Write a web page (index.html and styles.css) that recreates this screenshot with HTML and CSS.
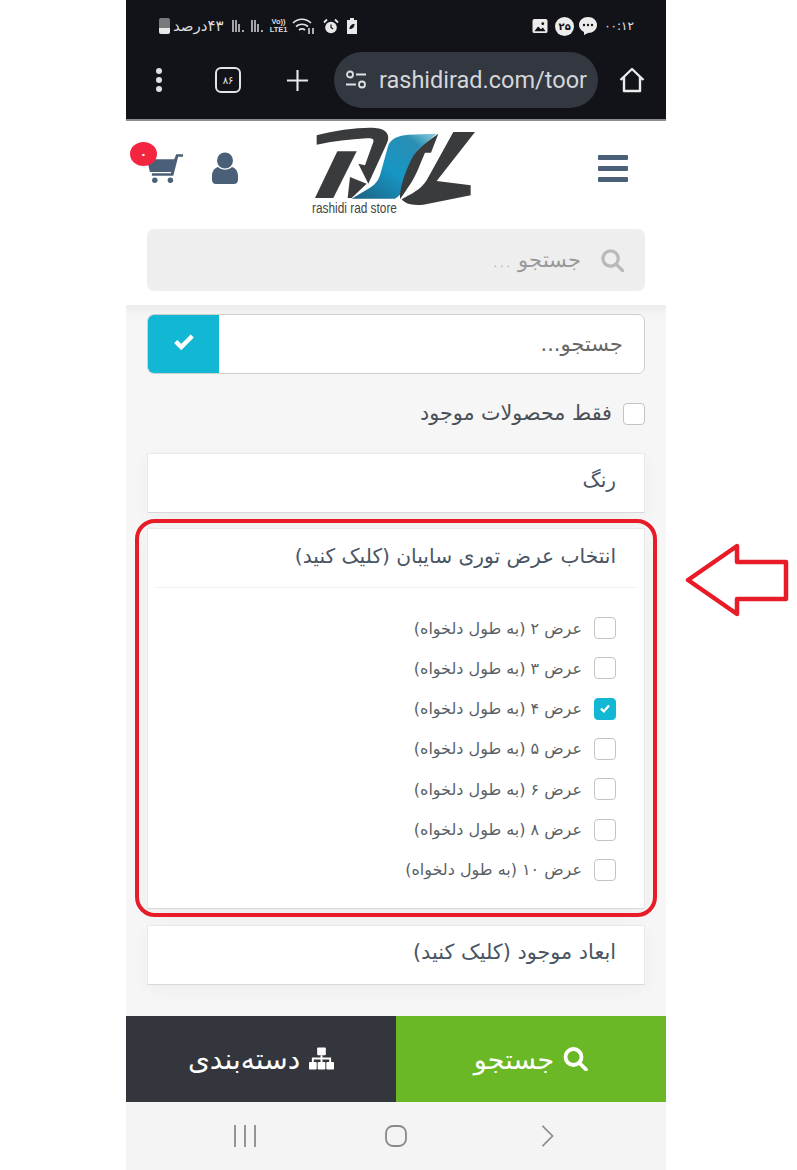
FILE: index.html
```html
<!DOCTYPE html>
<html lang="fa">
<head>
    <meta charset="UTF-8">
    <meta name="viewport" content="width=device-width, initial-scale=1.0">
    <title>rashidi rad store</title>
    <link rel="stylesheet" href="styles.css">
</head>
<body>
    <div class="phone">
        <!-- android status bar + chrome toolbar -->
        <div class="top-dark">
            <div class="status-bar">
                <div class="status-group">
                    <span class="battery"></span>
                    <span class="status-text" dir="rtl">۴۳درصد</span>
                    <svg class="signal" viewBox="0 0 14 14"><path d="M1 1v12M4 1v12M7 5v8M11 11v2" stroke="#d8d8d8" stroke-width="1.500"/></svg>
                    <svg class="signal" viewBox="0 0 14 14"><path d="M1 1v12M4 1v12M7 5v8M11 11v2" stroke="#d8d8d8" stroke-width="1.500"/></svg>
                    <span class="volte">Vo))<br>LTE1</span>
                    <svg class="wifi" viewBox="0 0 24 18" fill="none" stroke="#e4e4e4" stroke-width="1.700"><path d="M1 6c5-5 13-5 18 0M4 9.500c3.500-3 8.500-3 12 0M7 13c2-1.500 4-1.500 6 0"/><path d="M10 16h.1M17 11v6M21 17v-6" stroke-width="1.500"/></svg>
                    <svg class="alarm" viewBox="0 0 16 16"><circle cx="8" cy="9" r="5.800" fill="#e8e8e8"/><path d="M8 6v3l2 1.500" stroke="#111318" stroke-width="1.200" fill="none"/><path d="M1 4l3-3M15 4l-3-3" stroke="#e8e8e8" stroke-width="1.800"/></svg>
                    <svg class="batt-saver" viewBox="0 0 12 16"><path d="M4 0h4v2h3v14H1V2h3z" fill="#e8e8e8"/><path d="M3.500 11c0-3 2-5 5-5 0 3-2 5-5 5z" fill="#111318"/></svg>
                </div>
                <div class="status-group">
                    <svg class="picture" viewBox="0 0 16 16"><rect width="16" height="15" rx="2" fill="#ececec"/><path d="M2 13l4-5 3 3 2-2 3 4z" fill="#111318"/><circle cx="11" cy="5" r="1.500" fill="#111318"/></svg>
                    <span class="count-dot">۲۵</span>
                    <svg class="chat" viewBox="0 0 18 18"><path d="M9 0c5 0 9 3.500 9 8s-4 8-9 8l-4 2v-3C2 13.500 0 11 0 8c0-4.500 4-8 9-8z" fill="#ececec"/><circle cx="5" cy="8" r="1.200" fill="#111318"/><circle cx="9" cy="8" r="1.200" fill="#111318"/><circle cx="13" cy="8" r="1.200" fill="#111318"/></svg>
                    <span class="status-clock">۰۰:۱۲</span>
                </div>
            </div>
            <div class="toolbar">
                <span class="dots"><i></i><i></i><i></i></span>
                <span class="tab-count">۸۶</span>
                <svg class="plus" viewBox="0 0 24 24"><path d="M12 1v22M1 12h22" stroke="#e8e8e8" stroke-width="2.200"/></svg>
                <div class="url-pill">
                    <svg class="tune" viewBox="0 0 22 20" fill="none" stroke="#dfe1e6" stroke-width="1.800"><circle cx="5" cy="4.500" r="3"/><path d="M11 4.500h10M1 14.500h10"/><circle cx="17" cy="14.500" r="3"/></svg>
                    <span class="url-text">rashidirad.com/toor</span>
                </div>
                <svg class="home" viewBox="0 0 26 26" fill="none" stroke="#ececec" stroke-width="2.400" stroke-linejoin="round"><path d="M1.500 13L13 2l11.500 11M5 10v14h16V10"/></svg>
            </div>
        </div>

        <!-- site header -->
        <header class="site-header">
            <div class="header-row">
                <div class="header-icons">
                    <div class="cart">
                        <span class="cart-badge">۰</span>
                        <svg class="cart-icon" viewBox="0 0 38 32"><path d="M0 7h28l2-5h7v2.500h-5L27 24H5V21.500h19.500l.5-1.500H3z" fill="#4a6078"/><circle cx="8" cy="28.500" r="2.800" fill="#4a6078"/><circle cx="24" cy="28.500" r="2.800" fill="#4a6078"/></svg>
                    </div>
                    <svg class="user-icon" viewBox="0 0 26 32"><circle cx="13" cy="8.500" r="8" fill="#4a6078"/><path d="M6 15c4 3.500 10 3.500 14 0 3.500 1 6 4 6 9v4c0 2-1.500 4-4 4H4c-2.500 0-4-2-4-4v-4c0-5 2.500-8 6-9z" fill="#4a6078"/></svg>
                </div>
                <div class="logo">
                    <svg class="logo-mark" viewBox="0 0 540 288">
                        <defs>
                            <linearGradient id="blue" x1="0" y1="1" x2="1" y2="0">
                                <stop offset="0" stop-color="#1d5f80"/>
                                <stop offset="0.45" stop-color="#1796c4"/>
                                <stop offset="0.8" stop-color="#2a8fb4"/>
                                <stop offset="1" stop-color="#8fd0e2"/>
                            </linearGradient>
                        </defs>
                        <path d="M35 40C90 25 170 15 210 18c35 2 48 22 35 47L190 185l-30-60 20 5 25-70c3-10-5-12-20-11-50 3-100 8-150 19z" fill="#3a3b3d"/>
                        <path d="M97 88h58L85 228H30z" fill="#3a3b3d"/>
                        <path d="M135 165l50 20-45 43h-12z" fill="#3a3b3d"/>
                        <path d="M395 35L355 70c-20 15-30 30-35 50l-20 70c-6 20-15 32-30 40H140l50-30c20-10 30-25 35-40l25-90c8-20 30-30 60-32z" fill="url(#blue)"/>
                        <path d="M400 35l-22 57h-18c-15 33-25 68-50 103-10 15-20 30-25 37-2-32 15-82 35-122 15-30 45-50 80-75z" fill="#3a3b3d"/>
                        <path d="M445 30h65L395 177l102 13v30l-142 28c-35 4-55-3-65-16 30-17 55-27 75-57z" fill="#3a3b3d"/>
                    </svg>
                    <span class="logo-text">rashidi rad store</span>
                </div>
                <div class="burger"><i></i><i></i><i></i></div>
            </div>
            <div class="header-search" dir="rtl">
                <svg class="search-icon" viewBox="0 0 24 24" fill="none" stroke="#b9b9b9" stroke-width="3.400"><circle cx="10" cy="10" r="8"/><path d="M16 16l6.500 6.500" stroke-linecap="round"/></svg>
                <span class="header-search-text">جستجو ...</span>
            </div>
        </header>

        <!-- filters -->
        <main class="filters" dir="rtl">
            <div class="filter-search">
                <span class="filter-search-text">جستجو...</span>
                <span class="filter-search-btn">
                    <svg class="btn-check" viewBox="0 0 24 18"><path d="M3 9l6 6L21 3" fill="none" stroke="#fff" stroke-width="5"/></svg>
                </span>
            </div>
            <label class="stock-row">
                <span class="box"></span>
                <span class="stock-label">فقط محصولات موجود</span>
            </label>
            <div class="card card-closed">رنگ</div>
            <div class="card card-open">
                <div class="card-title">انتخاب عرض توری سایبان (کلیک کنید)</div>
                <div class="option-list">
                    <div class="option"><span class="box"></span><span>عرض ۲ (به طول دلخواه)</span></div>
                    <div class="option"><span class="box"></span><span>عرض ۳ (به طول دلخواه)</span></div>
                    <div class="option">
                        <span class="box box-on"><svg viewBox="0 0 24 18"><path d="M5 9l5 5L19 4" fill="none" stroke="#fff" stroke-width="4"/></svg></span>
                        <span>عرض ۴ (به طول دلخواه)</span>
                    </div>
                    <div class="option"><span class="box"></span><span>عرض ۵ (به طول دلخواه)</span></div>
                    <div class="option"><span class="box"></span><span>عرض ۶ (به طول دلخواه)</span></div>
                    <div class="option"><span class="box"></span><span>عرض ۸ (به طول دلخواه)</span></div>
                    <div class="option"><span class="box"></span><span>عرض ۱۰ (به طول دلخواه)</span></div>
                </div>
            </div>
            <div class="card card-closed card-last">ابعاد موجود (کلیک کنید)</div>
        </main>

        <!-- bottom buttons -->
        <div class="bottom-bar" dir="rtl">
            <div class="bottom-btn btn-search">
                <svg class="btn-icon" viewBox="0 0 24 24" fill="none" stroke="#fff" stroke-width="3.800"><circle cx="10" cy="10" r="8"/><path d="M16 16l6.500 6.500" stroke-linecap="round"/></svg>
                <span>جستجو</span>
            </div>
            <div class="bottom-btn btn-cats">
                <svg class="btn-icon" viewBox="0 0 26 24"><rect x="8.500" y="0" width="9" height="8" rx="1" fill="#fff"/><rect x="0" y="15" width="8" height="8" rx="1" fill="#fff"/><rect x="9" y="15" width="8" height="8" rx="1" fill="#fff"/><rect x="18" y="15" width="8" height="8" rx="1" fill="#fff"/><path d="M13 8v8M4 16v-4.500h18V16" fill="none" stroke="#fff" stroke-width="2"/></svg>
                <span>دسته‌بندی</span>
            </div>
        </div>

        <!-- android nav -->
        <div class="nav-bar">
            <svg class="nav-recent" viewBox="0 0 22 22"><path d="M1 0v22M11 0v22M21 0v22" stroke="#8a8a8a" stroke-width="1.800"/></svg>
            <svg class="nav-home" viewBox="0 0 22 22"><rect x="1" y="1" width="20" height="20" rx="7" fill="none" stroke="#8a8a8a" stroke-width="1.800"/></svg>
            <svg class="nav-back" viewBox="0 0 14 24"><path d="M1.500 1l11 11-11 11" fill="none" stroke="#8a8a8a" stroke-width="1.800"/></svg>
        </div>

        <!-- red marks drawn on top of the screenshot -->
        <div class="mark-box"></div>
    </div>
    <svg class="mark-arrow" viewBox="0 0 104 74"><path d="M3 37L52 3v16h49v37H52v15z" fill="none" stroke="#e81c28" stroke-width="4.500" stroke-linejoin="round"/></svg>
</body>
</html>
```

FILE: styles.css
```css
body {
    margin: 0;
    background: #fff;
    font-family: "DejaVu Sans", "Noto Sans", sans-serif;
    position: relative;
    height: 1170px;
    overflow: hidden;
}
i {
    display: block;
}
.phone {
    position: relative;
    width: 540px;
    height: 1170px;
    margin-left: 126px;
    display: flex;
    flex-direction: column;
}

/* dark top */
.top-dark {
    height: 119px;
    background: #111318;
    border-bottom: 2px solid #8d8d8d;
    flex-shrink: 0;
}
.status-bar {
    height: 52px;
    padding: 0 32px 0 33px;
    display: flex;
    justify-content: space-between;
    align-items: center;
}
.status-group {
    display: flex;
    align-items: center;
    gap: 5px;
}
.battery {
    width: 11px;
    height: 16px;
    border-radius: 2px;
    background: linear-gradient(#77797c 60%, #e8e8e8 60%);
}
.status-text {
    color: #dedede;
    font-size: 15px;
    margin-left: -2px;
    margin-right: 3px;
}
.signal {
    width: 14px;
    height: 14px;
}
.volte {
    color: #dedede;
    font-family: "Liberation Sans", sans-serif;
    font-size: 7.500px;
    line-height: 8px;
    font-weight: bold;
    text-align: center;
}
.wifi {
    width: 24px;
    height: 18px;
}
.alarm {
    width: 16px;
    height: 17px;
    margin-left: 2px;
}
.batt-saver {
    width: 12px;
    height: 16px;
    margin-left: 2px;
}
.picture {
    width: 16px;
    height: 15px;
}
.count-dot {
    width: 19px;
    height: 19px;
    margin-left: 2px;
    border-radius: 50%;
    background: #ececec;
    color: #111318;
    font-size: 10px;
    font-weight: bold;
    display: flex;
    align-items: center;
    justify-content: center;
}
.chat {
    width: 18px;
    height: 18px;
}
.status-clock {
    color: #e4e4e4;
    font-size: 12px;
    padding-left: 2px;
}
.toolbar {
    height: 56px;
    padding: 0 21px 0 30px;
    display: flex;
    align-items: center;
}
.dots {
    width: 7px;
    display: flex;
    flex-direction: column;
    gap: 3px;
}
.dots i {
    width: 6px;
    height: 6px;
    border-radius: 50%;
    background: #e0e0e0;
}
.tab-count {
    width: 22px;
    height: 22px;
    margin-left: 52px;
    border: 2px solid #e4e4e4;
    border-radius: 6px;
    color: #e4e4e4;
    font-size: 10px;
    display: flex;
    align-items: center;
    justify-content: center;
}
.plus {
    width: 23px;
    height: 23px;
    margin-left: 45px;
}
.url-pill {
    width: 264px;
    height: 56px;
    margin-left: 25px;
    border-radius: 28px;
    background: #33373f;
    display: flex;
    align-items: center;
    padding-left: 11px;
    box-sizing: border-box;
}
.tune {
    width: 22px;
    height: 20px;
    flex-shrink: 0;
}
.url-text {
    margin-left: 12px;
    color: #d4d6da;
    font-family: Roboto, sans-serif;
    font-size: 23.500px;
    white-space: nowrap;
    flex-shrink: 0;
}
.home {
    width: 26px;
    height: 26px;
    margin-left: auto;
}

/* white header */
.site-header {
    height: 184px;
    background: #fff;
    padding: 0 21px;
    box-sizing: border-box;
    flex-shrink: 0;
}
.header-row {
    height: 94px;
    margin-bottom: 14px;
    position: relative;
    display: flex;
    align-items: center;
    justify-content: space-between;
}
.header-icons {
    display: flex;
    align-items: center;
    gap: 28px;
}
.cart {
    position: relative;
}
.cart-icon {
    display: block;
    width: 37px;
    height: 32px;
}
.cart-badge {
    position: absolute;
    top: -10px;
    left: -17px;
    width: 27px;
    height: 24px;
    border-radius: 50%;
    background: #f4263f;
    color: #fff;
    font-size: 12px;
    font-weight: bold;
    display: flex;
    align-items: center;
    justify-content: center;
}
.user-icon {
    width: 26px;
    height: 32px;
}
.logo {
    position: absolute;
    left: 158px;
    top: 1px;
}
.logo-mark {
    display: block;
    width: 180px;
    height: 96px;
}
.logo-text {
    position: absolute;
    left: 7px;
    top: 77px;
    color: #444;
    font-family: "Liberation Sans", sans-serif;
    font-size: 15px;
    transform: scaleX(0.79);
    transform-origin: left center;
    white-space: nowrap;
}
.burger {
    width: 30px;
    margin-right: 17px;
    display: flex;
    flex-direction: column;
    gap: 6px;
}
.burger i {
    height: 5px;
    border-radius: 1px;
    background: #4a6078;
}
.header-search {
    height: 62px;
    border-radius: 7px;
    background: #eeeeee;
    display: flex;
    align-items: center;
    padding: 0 21px;
    gap: 20px;
}
.search-icon {
    width: 23px;
    height: 23px;
}
.header-search-text {
    color: #999;
    font-size: 20.500px;
    font-weight: 300;
}

/* filters */
.filters {
    height: 711px;
    background: linear-gradient(#ececec, #f6f6f6 12px);
    padding: 9px 21px 0;
    box-sizing: border-box;
    flex-shrink: 0;
}
.filter-search {
    height: 60px;
    background: #fff;
    border: 1px solid #cfcfcf;
    border-radius: 7px;
    box-sizing: border-box;
    display: flex;
    justify-content: space-between;
    align-items: center;
    padding-right: 21px;
    overflow: hidden;
}
.filter-search-text {
    color: #666;
    font-size: 21px;
}
.filter-search-btn {
    width: 71px;
    height: 60px;
    background: #12b7d4;
    display: flex;
    align-items: center;
    justify-content: center;
    padding-bottom: 6px;
    box-sizing: border-box;
}
.btn-check {
    width: 22px;
    height: 17px;
}
.stock-row {
    display: flex;
    align-items: center;
    gap: 11px;
    height: 22px;
    margin-top: 29px;
}
.stock-label {
    color: #4a4f57;
    font-size: 20.700px;
    padding-bottom: 3px;
}
.box {
    width: 22px;
    height: 22px;
    background: #fff;
    border: 1px solid #c4c4c4;
    border-radius: 4px;
    box-sizing: border-box;
    flex-shrink: 0;
    display: flex;
    align-items: center;
    justify-content: center;
}
.box-on {
    background: #12b7d4;
    border-color: #12b7d4;
}
.box-on svg {
    width: 14px;
    height: 11px;
}
.card {
    background: #fff;
    border: 1px solid #e9e9e9;
    border-bottom-color: #d8d8d8;
    box-sizing: border-box;
    box-shadow: 0 6px 18px rgba(0, 0, 0, 0.04);
    color: #4a5564;
    font-size: 20.200px;
}
.card-closed {
    height: 60px;
    display: flex;
    align-items: center;
    padding: 0 28px 6px;
    margin-top: 28px;
}
.card-open {
    height: 381px;
    margin-top: 15px;
    padding: 0 8px;
}
.card-last {
    margin-top: 16px;
    font-size: 20.800px;
}
.card-title {
    height: 59px;
    padding: 0 20px 4px;
    display: flex;
    align-items: center;
    border-bottom: 1px solid #f0f0f0;
    box-sizing: border-box;
}
.option-list {
    padding: 29px 20px 0 0;
    display: flex;
    flex-direction: column;
    gap: 18.330px;
}
.option {
    display: flex;
    align-items: center;
    gap: 12px;
    height: 22px;
    color: #5a5f66;
    font-size: 16px;
}

/* bottom */
.bottom-bar {
    height: 86px;
    display: flex;
    flex-shrink: 0;
}
.bottom-btn {
    width: 270px;
    display: flex;
    align-items: center;
    justify-content: center;
    gap: 9px;
    color: #fff;
    font-size: 27px;
}
.btn-search {
    background: #6ab825;
}
.btn-cats {
    background: #33373d;
    font-size: 28px;
}
.btn-icon {
    width: 25px;
    height: 24px;
}
.nav-bar {
    flex: 1;
    background: #f4f4f4;
    display: flex;
    align-items: center;
    padding-left: 108px;
}
.nav-recent {
    width: 22px;
    height: 22px;
}
.nav-home {
    width: 22px;
    height: 22px;
    margin-left: 129px;
}
.nav-back {
    width: 13px;
    height: 22px;
    margin-left: 134px;
}

/* annotation marks */
.mark-box {
    position: absolute;
    left: 9px;
    top: 519px;
    width: 522px;
    height: 398px;
    border: 4px solid #e81c28;
    border-radius: 20px;
    box-sizing: border-box;
    pointer-events: none;
}
.mark-arrow {
    position: absolute;
    left: 685px;
    top: 543px;
    width: 104px;
    height: 74px;
}
```
